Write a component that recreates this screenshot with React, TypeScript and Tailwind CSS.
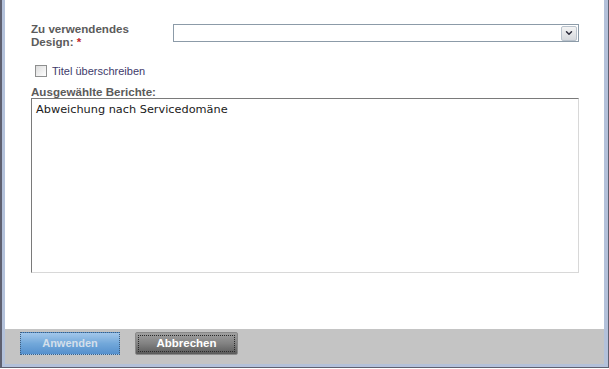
import { ChevronDown } from "lucide-react";

export default function App() {
  return (
    <div className="w-[609px] h-[369px] bg-white" style={{ fontFamily: '"Liberation Sans", Arial, sans-serif' }}>
      <div className="w-[609px] h-[368px] border-l-2 border-r border-b border-[#5e6070] flex">
        <div className="flex-1 flex flex-col border-l-[3px] border-r-[4px] border-b-[3px] border-[#b3c1da]">
          {/* body */}
          <div className="flex-1 bg-white pl-[26px] pr-[25px] pt-[19px]">
            <div className="flex">
              <div className="w-[142px] pt-[3px] text-[11.6px] leading-[13px] font-bold text-[#5b5b5b]">
                Zu verwendendes
                <br />
                Design: <span className="text-[#c0272d]">*</span>
              </div>
              <div className="flex-1 mt-[5px] h-[18px] border border-[#8c9ba8] bg-white flex justify-end items-center pr-px">
                <div className="w-[16px] h-[15px] border border-[#b9c2cc] rounded-[2px] bg-gradient-to-b from-[#f4f4f4] to-[#d6d9dd] flex items-center justify-center">
                  <ChevronDown className="w-[10px] h-[10px] text-[#2a2a3a]" strokeWidth={3.5} />
                </div>
              </div>
            </div>
            <div className="flex items-center mt-[17px] ml-[4px] h-[12px]">
              <div className="w-[12px] h-[12px] border border-[#8e8f8f] bg-gradient-to-br from-[#dcdcdc] to-white" />
              <span className="ml-[5px] text-[11px] text-[#3e3a6a]">Titel überschreiben</span>
            </div>
            <div className="mt-[8px] text-[11.6px] leading-[13px] font-bold text-[#5b5b5b]">Ausgewählte Berichte:</div>
            <div className="h-[175px] border border-t-[#7a7a7a] border-l-[#7a7a7a] border-r-[#d8d8d8] border-b-[#d8d8d8] px-[4px] pt-[3px]">
              <div className="text-[11.3px] text-[#1a1a1a]" style={{ fontFamily: '"DejaVu Sans", Verdana, sans-serif' }}>
                Abweichung nach Servicedomäne
              </div>
            </div>
          </div>
          {/* footer */}
          <div className="h-[35px] bg-[#c4c4c4] flex items-start pt-[3px] pl-[15px] gap-[15px]">
            <button className="w-[100px] h-[23px] bg-gradient-to-b from-[#a3c7ea] via-[#72a8da] to-[#5590cd] border border-dotted border-[#3f5f80] text-[11px] font-bold text-[#d3dfeb]">
              Anwenden
            </button>
            <button className="w-[103px] h-[23px] rounded-[2px] bg-gradient-to-b from-[#a0a0a0] via-[#828282] to-[#5a5a5a] border border-[#8a8a8a] p-[2px]">
              <div className="w-full h-full border border-dotted border-[#2a2a2a] flex items-center justify-center text-[11.5px] font-bold text-white">
                Abbrechen
              </div>
            </button>
          </div>
        </div>
      </div>
    </div>
  );
}
